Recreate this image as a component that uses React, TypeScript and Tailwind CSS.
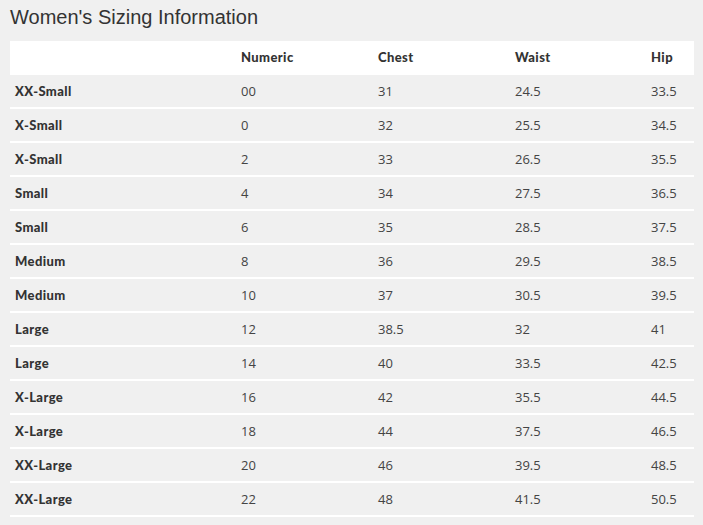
import React from "react";

const rows: [string, string, string, string, string][] = [
  ["XX-Small", "00", "31", "24.5", "33.5"],
  ["X-Small", "0", "32", "25.5", "34.5"],
  ["X-Small", "2", "33", "26.5", "35.5"],
  ["Small", "4", "34", "27.5", "36.5"],
  ["Small", "6", "35", "28.5", "37.5"],
  ["Medium", "8", "36", "29.5", "38.5"],
  ["Medium", "10", "37", "30.5", "39.5"],
  ["Large", "12", "38.5", "32", "41"],
  ["Large", "14", "40", "33.5", "42.5"],
  ["X-Large", "16", "42", "35.5", "44.5"],
  ["X-Large", "18", "44", "37.5", "46.5"],
  ["XX-Large", "20", "46", "39.5", "48.5"],
  ["XX-Large", "22", "48", "41.5", "50.5"],
];

const grid = "grid grid-cols-[226px_137px_137px_136px_48px]";

export default function App() {
  return (
    <div className="w-[703px] h-[525px] bg-[#f0f0f0] overflow-hidden">
      <h1 className="pl-[10px] pt-[6px] h-[41px] text-[20px] leading-[23px] text-[#333] font-['Liberation_Sans',Arial,sans-serif]">
        Women's Sizing Information
      </h1>
      <div className="mx-[10px] w-[684px]">
        <div className={`${grid} h-[34px] items-center bg-white font-['Lato',sans-serif] font-black tracking-[0.4px] text-[13px] text-[#333]`}>
          <div className="pl-[5px]"></div>
          <div className="pl-[5px]">Numeric</div>
          <div className="pl-[5px]">Chest</div>
          <div className="pl-[5px]">Waist</div>
          <div className="pl-[5px]">Hip</div>
        </div>
        {rows.map((r, i) => (
          <div
            key={i}
            className={`${grid} h-[34px] pt-px items-center border-b-2 border-white text-[13px] text-[#444]`}
          >
            <div className="pl-[5px] font-['Lato',sans-serif] font-black tracking-[0.4px] text-[#333]">{r[0]}</div>
            <div className="pl-[5px] font-['Open_Sans',sans-serif]">{r[1]}</div>
            <div className="pl-[5px] font-['Open_Sans',sans-serif]">{r[2]}</div>
            <div className="pl-[5px] font-['Open_Sans',sans-serif]">{r[3]}</div>
            <div className="pl-[5px] font-['Open_Sans',sans-serif]">{r[4]}</div>
          </div>
        ))}
      </div>
    </div>
  );
}
